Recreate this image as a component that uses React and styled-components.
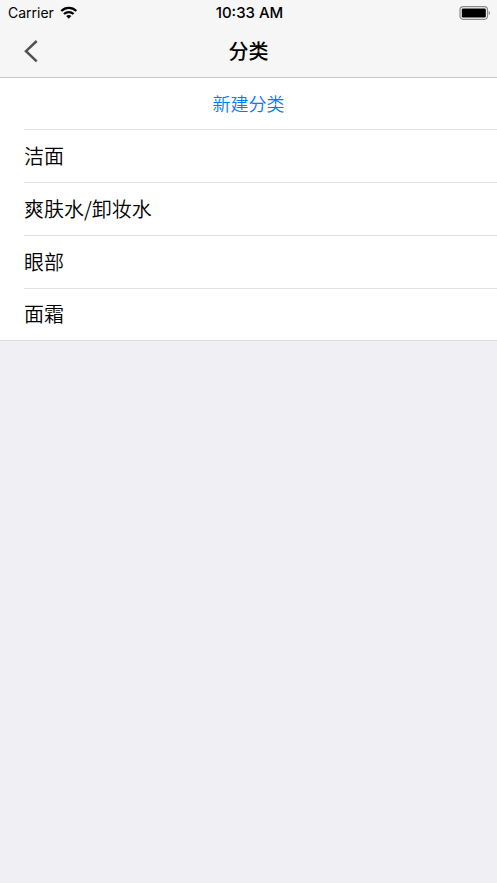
import React from "react";
import styled, { createGlobalStyle } from "styled-components";

const GlobalStyle = createGlobalStyle`
  * { box-sizing: border-box; }
  body {
    margin: 0;
    background: #efeff4;
    color: #000;
    font-family: Inter, "Noto Sans CJK SC", sans-serif;
  }
  button { font: inherit; border: 0; background: none; padding: 0; margin: 0; color: inherit; }
`;

const Header = styled.header`
  background: #f6f6f7;
  border-bottom: 1px solid #c8c8ca;
`;

const StatusBar = styled.div`
  display: grid;
  grid-template-columns: 1fr auto 1fr;
  align-items: center;
  height: 26px;
  padding: 0 6px 0 8px;
  font-size: 14px;
  line-height: 20px;
`;

const Carrier = styled.div`
  display: flex;
  align-items: center;
  gap: 6px;
`;

const Clock = styled.time`
  font-size: 15px;
  font-weight: 500;
`;

const BatteryIcon = styled.svg`
  justify-self: end;
`;

const NavBar = styled.nav`
  display: grid;
  grid-template-columns: 1fr auto 1fr;
  align-items: center;
  height: 51px;
  padding: 0 24px;
`;

const BackButton = styled.button`
  display: flex;
  justify-self: start;
`;

const Title = styled.h1`
  margin: 0;
  font-size: 20px;
  line-height: 30px;
  font-weight: 500;
`;

const Panel = styled.main`
  background: #fff;
  border-bottom: 1px solid #dcdce0;
  font-family: "Noto Sans CJK SC", sans-serif;
  font-weight: 350;
`;

const AddButton = styled.button`
  display: block;
  width: 100%;
  height: 51px;
  padding-bottom: 2px;
  color: #007aff;
  font-size: 18px;
`;

const List = styled.ul`
  list-style: none;
  margin: 0;
  padding: 0 0 0 24px;
`;

const Row = styled.li`
  display: flex;
  align-items: center;
  height: 53px;
  padding-bottom: 2px;
  border-top: 1px solid #e1e1e3;
  font-size: 20px;

  &:last-child { height: 52px; }
`;

const categories = ["洁面", "爽肤水/卸妆水", "眼部", "面霜"];

export default function App() {
  return (
    <>
      <GlobalStyle />
      <Header>
        <StatusBar>
          <Carrier>
            <span>Carrier</span>
            <svg width="18" height="14" viewBox="0 0 18 14" aria-hidden="true">
              <g fill="none" stroke="#000" strokeWidth="2.3">
                <path d="M1.3 5C5.5 0.9 12.1 0.9 16.3 5" />
                <path d="M4 8C6.7 5.4 10.9 5.4 13.6 8" />
              </g>
              <path d="M6.2 10.1C7.7 8.7 9.9 8.7 11.4 10.1L8.8 12.7Z" />
            </svg>
          </Carrier>
          <Clock>10:33 AM</Clock>
          <BatteryIcon width="32" height="14" viewBox="0 0 32 14" aria-hidden="true">
            <rect x="1" y="0.7" width="27.5" height="12.6" rx="3.2" fill="none" stroke="#8b8b8d" strokeWidth="1.2" />
            <rect x="2.8" y="2.4" width="24" height="9.2" rx="1.4" />
            <path d="M29.7 5C31.4 5.4 31.4 8.6 29.7 9Z" fill="#8b8b8d" />
          </BatteryIcon>
        </StatusBar>
        <NavBar>
          <BackButton aria-label="返回">
            <svg width="14" height="24" viewBox="0 0 14 24" fill="none" stroke="#515151" strokeWidth="2.5" aria-hidden="true">
              <path d="M12.7 1L2 11.2L12.7 21.4" />
            </svg>
          </BackButton>
          <Title>分类</Title>
        </NavBar>
      </Header>
      <Panel>
        <AddButton>新建分类</AddButton>
        <List>
          {categories.map((name) => (
            <Row key={name}>{name}</Row>
          ))}
        </List>
      </Panel>
    </>
  );
}
